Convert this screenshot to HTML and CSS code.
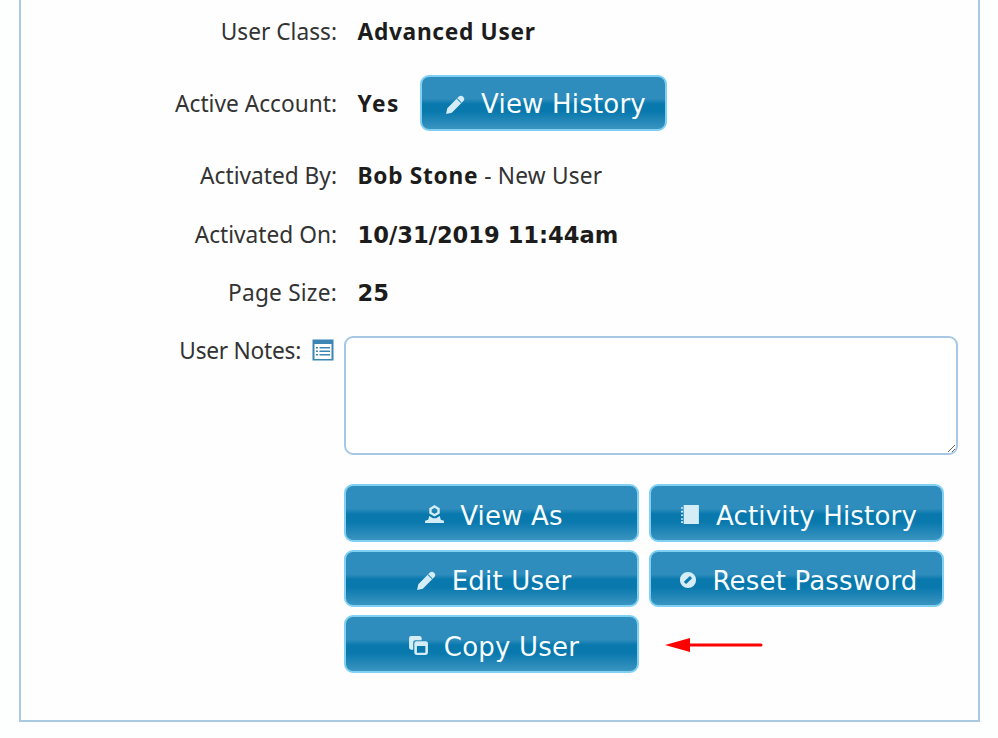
FILE: index.html
```
<!DOCTYPE html>
<html lang="en">
<head>
<meta charset="utf-8">
<title>User Details</title>
<link rel="stylesheet" href="styles.css">
</head>
<body>
<main class="panel">
  <div class="row row-class"><span class="label">User Class:</span><span class="value"><b>Advanced User</b></span></div>
  <div class="row row-active"><span class="label">Active Account:</span><span class="value value-flex"><b class="yes">Yes</b>
    <button class="btn btn-history" type="button"><svg class="ico" viewBox="0 0 20 20"><path d="M1 19l1.200-5.500L13 2.700a2.800 2.800 0 0 1 4.300 4.300L6.500 17.800z"/><path d="M11.500 4.500l4 4" stroke="#2e8dbc" stroke-width="1"/></svg>View History</button></span></div>
  <div class="row row-by"><span class="label">Activated By:</span><span class="value"><b>Bob Stone</b> - New User</span></div>
  <div class="row row-on"><span class="label">Activated On:</span><span class="value"><b class="num">10/31/2019 11:44am</b></span></div>
  <div class="row row-size"><span class="label label-size">Page Size:</span><span class="value"><b class="num">25</b></span></div>
  <div class="notes">
    <div class="notes-label"><span class="label-text">User Notes:</span>
      <svg class="notes-ico" viewBox="0 0 22 22"><rect x="0.5" y="0.5" width="21" height="21" fill="#3b86b5"/><rect x="2.5" y="5" width="17" height="15" fill="#fff"/><path d="M4 8h2v1.600H4zM7.500 8H18v1.600H7.500zM4 11.500h2v1.600H4zM7.500 11.500H18v1.600H7.500zM4 15h2v1.600H4zM7.500 15H18v1.600H7.500z" fill="#3b86b5"/></svg></div>
    <textarea class="notes-input" aria-label="User Notes"></textarea>
  </div>
  <div class="actions">
    <button class="btn" type="button"><svg class="ico" viewBox="0 0 20 20"><path fill-rule="evenodd" d="M10 1l5 3v5l-5 3-5-3V4zm0 2.600L7.300 5.200v2.600L10 9.400l2.700-1.600V5.200z"/><path d="M5 11.500l3.500 2h3l3.500-2 1 3.500 3 1v2H1v-2l3-1z"/></svg>View As</button>
    <button class="btn" type="button"><svg class="ico" viewBox="0 0 20 20"><path d="M3.500 1H18v18H3.500zM1 3h1.800v1.500H1zM1 6.500h1.800V8H1zM1 10h1.800v1.500H1zM1 13.500h1.800V15H1zM1 16.500h1.800V18H1z"/></svg>Activity History</button>
    <button class="btn" type="button"><svg class="ico" viewBox="0 0 20 20"><path d="M1 19l1.200-5.500L13 2.700a2.800 2.800 0 0 1 4.300 4.300L6.500 17.800z"/><path d="M11.500 4.500l4 4" stroke="#2e8dbc" stroke-width="1"/></svg>Edit User</button>
    <button class="btn" type="button"><svg class="ico ico-small" viewBox="0 0 20 20"><path fill-rule="evenodd" d="M10 1a9 9 0 1 1 0 18 9 9 0 0 1 0-18zM5.500 12a5.500 5.500 0 0 0 2.500 2.500L14.500 8A5.500 5.500 0 0 0 12 5.500z"/></svg>Reset Password</button>
    <button class="btn" type="button"><svg class="ico" viewBox="0 0 20 20"><path fill-rule="evenodd" d="M3 1h8a2 2 0 0 1 2 2v2H7a2 2 0 0 0-2 2v7H3a2 2 0 0 1-2-2V3a2 2 0 0 1 2-2zM8 6h9a2 2 0 0 1 2 2v9a2 2 0 0 1-2 2H8a2 2 0 0 1-2-2V8a2 2 0 0 1 2-2zm.500 4.500v6.500h8v-6.500z"/></svg>Copy User</button>
    <div class="arrow-cell"><svg class="arrow" viewBox="0 0 98 16"><path d="M0 8L25 1v5.500h71a1.500 1.500 0 0 1 0 3H25V15z" fill="#f00"/></svg></div>
  </div>
</main>
</body>
</html>
```
FILE: styles.css
```
html, body {
  margin: 0;
  height: 738px;
  overflow: hidden;
  background: #fdfefe;
}
body {
  padding: 0 18px 0 19px;
  box-sizing: border-box;
  font-family: "Noto Sans", Tahoma, sans-serif;
  font-size: 22.700px;
  color: #333;
}
.panel {
  height: 722px;
  box-sizing: border-box;
  border: 2px solid #acc9e2;
  border-top: none;
  background: #fefefe;
}
.row {
  display: grid;
  grid-template-columns: 316px 1fr;
  column-gap: 20.500px;
  align-items: center;
}
.label { text-align: right; }
.label-size { letter-spacing: 0.2px; }
.value { letter-spacing: 0.2px; }
.value b { color: #1c1c1c; letter-spacing: 0.7px; }
.value b.yes { letter-spacing: 1.500px; }
.value b.num {
  font-family: "DejaVu Sans", Verdana, sans-serif;
  font-size: 22.600px;
  letter-spacing: 0;
}
.value-flex { display: flex; align-items: center; }
.row-class { height: 62px; }
.row-active { height: 82px; }
.row-by { height: 63px; }
.row-on { height: 54px; }
.row-size { height: 62px; }
.btn {
  display: inline-flex;
  align-items: center;
  justify-content: center;
  gap: 15px;
  height: 56px;
  padding: 2px 0 0 4px;
  box-sizing: border-box;
  border: 2px solid #7fd0f2;
  border-radius: 9px;
  color: #f8fcfe;
  font: 26px "DejaVu Sans", Verdana, sans-serif;
  letter-spacing: 0.2px;
  background: linear-gradient(#2e8dbc 0, #2e8dbc 42%, #0878ad 52%, #0878ad 66%, #3a94c0 100%);
}
.btn-history { width: 247px; margin-left: 20px; }
.ico { width: 21px; height: 21px; fill: #d4ecf6; flex: none; }
.ico-small { width: 18px; height: 18px; }
.notes {
  display: grid;
  grid-template-columns: 323px 614px;
  margin-top: 13px;
}
.notes-label {
  display: flex;
  justify-content: flex-end;
  align-items: flex-start;
  gap: 11px;
  padding: 0 10px 0 0;
  line-height: 29px;
}
.label-text { letter-spacing: -0.25px; }
.notes-ico { width: 22px; height: 22px; margin-top: 3px; }
.notes-input {
  display: block;
  width: 614px;
  height: 119px;
  box-sizing: border-box;
  margin: 0;
  border: 2px solid #a6c8e4;
  border-radius: 9px;
  background: #fff;
}
.actions {
  display: grid;
  grid-template-columns: 295px 295px;
  grid-auto-rows: 57.500px;
  column-gap: 10px;
  row-gap: 8px;
  margin: 29px 0 0 323px;
}
.actions .btn { width: 100%; height: 100%; padding-top: 6px; }
.actions .ico { margin-top: -2px; }
.arrow-cell { display: flex; align-items: center; padding: 2px 0 0 16px; }
.arrow { width: 98px; height: 16px; }
```
